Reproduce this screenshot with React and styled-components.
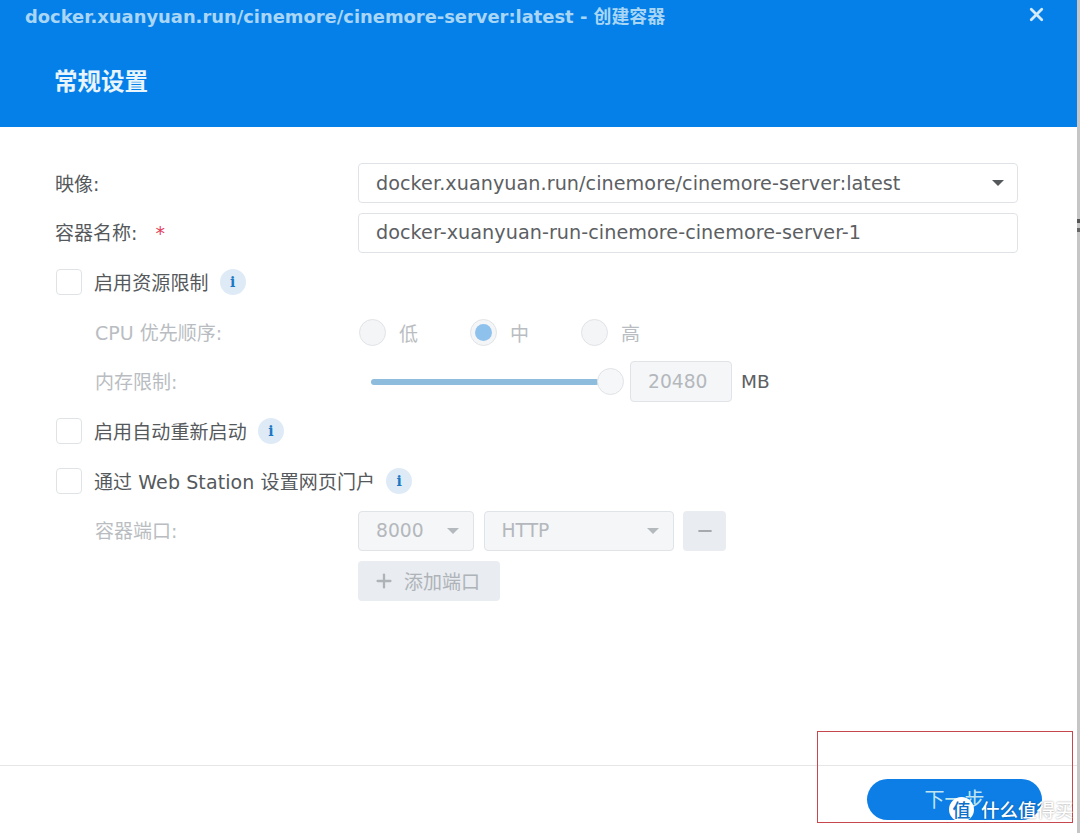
import React from 'react';
import styled, { createGlobalStyle } from 'styled-components';
import { X, Plus, Minus } from 'lucide-react';

const Global = createGlobalStyle`
  html, body { margin: 0; padding: 0; background: #fff; }
  body { font-family: "DejaVu Sans", "Noto Sans CJK SC", sans-serif; width: 1080px; height: 833px; overflow: hidden; }
`;

const CJK = `"DejaVu Sans", "Noto Sans CJK SC", sans-serif`;

const Dialog = styled.div`
  position: relative;
  width: 1077px;
  height: 833px;
  display: flex;
  flex-direction: column;
  background: #fff;
  border-right: 3px solid #c6c6c6;
`;

const EdgeNotch = styled.span`
  position: absolute;
  right: -3px;
  top: 219px;
  width: 3px;
  height: 13px;
  background: linear-gradient(#555 0 4px, #c6c6c6 4px 9px, #666 9px);
`;

const Header = styled.header`
  height: 127px;
  box-sizing: border-box;
  background: #0680e9;
  flex: none;
  display: flex;
  flex-direction: column;
  padding: 0 30px 0 25px;
`;

const TitleBar = styled.div`
  height: 29px;
  display: flex;
  align-items: center;
  justify-content: space-between;
`;

const WindowTitle = styled.div`
  font: 700 17.9px ${CJK};
  color: #a9d6f5;
  white-space: nowrap;
`;

const Close = styled.span`
  display: flex;
  color: #d3ebfb;
`;

const PageTitle = styled.h1`
  margin: 39px 0 0 29px;
  font: 700 23.5px/24px "Noto Sans CJK SC", sans-serif;
  color: #e9f5fd;
`;

const Form = styled.main`
  flex: 1;
  padding: 36px 59px 0 55px;
  display: flex;
  flex-direction: column;
  gap: 9.7px;
`;

const Row = styled.div`
  height: 40px;
  display: flex;
  align-items: center;
`;

const Label = styled.div`
  width: 303px;
  box-sizing: border-box;
  flex: none;
  font-size: 19px;
  white-space: nowrap;
  color: ${p => (p.$off ? '#b9bdc1' : '#55595c')};
  padding-left: ${p => (p.$indent ? '40px' : '0')};
  padding-bottom: 2px;
`;

const Star = styled.span`
  color: #e2415c;
  margin-left: 18px;
`;

const Field = styled.div`
  flex: 1;
  height: 40px;
  box-sizing: border-box;
  border: 1px solid #dfe3e8;
  border-radius: 4px;
  display: flex;
  align-items: center;
  justify-content: space-between;
  padding: 0 13px 0 17px;
  font-size: 19.2px;
  letter-spacing: 0.05px;
  color: #5c6063;
  white-space: nowrap;
`;

const Caret = styled.i`
  width: 0;
  height: 0;
  border: 6px solid transparent;
  border-top: 6px solid ${p => (p.$off ? '#b4b9be' : '#55595c')};
  border-bottom: 0;
`;

const Check = styled.span`
  width: 26px;
  height: 26px;
  box-sizing: border-box;
  flex: none;
  margin: 0 12px 0 1px;
  border: 1px solid #dfe3e6;
  border-radius: 4px;
  background: #fff;
`;

const CheckLabel = styled.span`
  font-size: 19px;
  letter-spacing: 0.1px;
  color: #55595c;
  white-space: nowrap;
  padding-bottom: 2px;
`;

const Info = styled.span`
  width: 26px;
  height: 26px;
  margin-left: 11px;
  flex: none;
  border-radius: 50%;
  background: #deebf7;
  color: #1d78c4;
  font: 700 14px/26px "DejaVu Serif", serif;
  text-align: center;
`;

const RadioGroup = styled.div`
  display: flex;
  align-items: center;
  margin-left: 1px;
`;

const RadioItem = styled.div`
  width: 111px;
  display: flex;
  align-items: center;
  gap: 13px;
  font-size: 19px;
  color: #b9bdc1;
`;

const Radio = styled.span`
  width: 27px;
  height: 27px;
  box-sizing: border-box;
  border-radius: 50%;
  border: 1px solid #e0e3e6;
  background: #f4f5f7;
  display: flex;
  align-items: center;
  justify-content: center;
  &::after {
    content: '';
    display: ${p => (p.$on ? 'block' : 'none')};
    width: 17px;
    height: 17px;
    border-radius: 50%;
    background: #8fc1ed;
  }
`;

const SliderWrap = styled.div`
  display: flex;
  align-items: center;
  margin-left: 13px;
`;

const Track = styled.div`
  width: 228px;
  height: 6px;
  border-radius: 3px;
  background: #8dbcdc;
`;

const Thumb = styled.span`
  width: 27px;
  height: 27px;
  box-sizing: border-box;
  margin-left: -2px;
  border-radius: 50%;
  border: 1px solid #e0e3e6;
  background: #f6f7f8;
`;

const NumberBox = styled.div`
  width: 102px;
  height: 41px;
  box-sizing: border-box;
  margin-left: 6px;
  border: 1px solid #e0e3e7;
  border-radius: 4px;
  background: #f5f6f8;
  color: #b4b8bc;
  font-size: 18.7px;
  line-height: 39px;
  padding-left: 17px;
`;

const Unit = styled.span`
  margin-left: 9px;
  font-size: 18.5px;
  color: #5c6063;
`;

const Dim = styled.div`
  width: ${p => p.$w}px;
  height: 40px;
  box-sizing: border-box;
  border: 1px solid #e0e3e7;
  border-radius: 4px;
  background: #f5f6f8;
  color: #b4b8bc;
  font-size: 18.7px;
  display: flex;
  align-items: center;
  justify-content: space-between;
  padding: 0 14px 0 17px;
  margin-right: 9.5px;
`;

const IconBtn = styled.div`
  width: 43px;
  height: 40px;
  border-radius: 4px;
  background: #e9ecf0;
  color: #a5aaaf;
  display: flex;
  align-items: center;
  justify-content: center;
`;

const AddBtn = styled.div`
  width: 142px;
  height: 40px;
  margin-left: 303px;
  border-radius: 4px;
  background: #e9ecf0;
  color: #aeb3b8;
  font-size: 19px;
  display: flex;
  align-items: center;
  padding-left: 15px;
  gap: 9px;
  box-sizing: border-box;
`;

const Footer = styled.footer`
  height: 68px;
  box-sizing: border-box;
  flex: none;
  border-top: 1px solid #e6e6e6;
  display: flex;
  justify-content: flex-end;
  padding: 13px 35px 0 0;
`;

const NextBtn = styled.div`
  width: 175px;
  height: 41px;
  border-radius: 21px;
  background: #0d7ee6;
  color: #bfe6f0;
  font-size: 20px;
  line-height: 39px;
  text-align: center;
  font-family: "Noto Sans CJK SC", sans-serif;
`;

const Callout = styled.div`
  position: absolute;
  left: 817px;
  top: 731px;
  width: 256px;
  height: 92px;
  box-sizing: border-box;
  border: 1px solid #c8474d;
`;

const Watermark = styled.div`
  position: absolute;
  left: 949px;
  top: 796px;
  display: flex;
  align-items: center;
  gap: 7px;
  color: #fff;
  font: 500 18.5px "Noto Sans CJK SC", sans-serif;
  white-space: nowrap;
  text-shadow: 0 0 2px rgba(0, 0, 0, 0.4);
`;

const Mark = styled.span`
  width: 25px;
  height: 25px;
  border-radius: 50%;
  background: #fff;
  color: #0d6fc9;
  font-size: 18px;
  line-height: 25px;
  text-align: center;
  text-shadow: none;
`;

const InfoDot = () => <Info>i</Info>;

export default function App() {
  return (
    <Dialog>
      <Global />
      <Header>
        <TitleBar>
          <WindowTitle>docker.xuanyuan.run/cinemore/cinemore-server:latest - 创建容器</WindowTitle>
          <Close><X size={21} strokeWidth={3.2} /></Close>
        </TitleBar>
        <PageTitle>常规设置</PageTitle>
      </Header>
      <Form>
        <Row>
          <Label>映像:</Label>
          <Field>docker.xuanyuan.run/cinemore/cinemore-server:latest<Caret /></Field>
        </Row>
        <Row>
          <Label>容器名称:<Star>*</Star></Label>
          <Field>docker-xuanyuan-run-cinemore-cinemore-server-1</Field>
        </Row>
        <Row>
          <Check /><CheckLabel>启用资源限制</CheckLabel><InfoDot />
        </Row>
        <Row>
          <Label $off $indent>CPU 优先顺序:</Label>
          <RadioGroup>
            <RadioItem><Radio />低</RadioItem>
            <RadioItem><Radio $on />中</RadioItem>
            <RadioItem><Radio />高</RadioItem>
          </RadioGroup>
        </Row>
        <Row>
          <Label $off $indent>内存限制:</Label>
          <SliderWrap>
            <Track /><Thumb />
            <NumberBox>20480</NumberBox>
            <Unit>MB</Unit>
          </SliderWrap>
        </Row>
        <Row>
          <Check /><CheckLabel>启用自动重新启动</CheckLabel><InfoDot />
        </Row>
        <Row>
          <Check /><CheckLabel>通过 Web Station 设置网页门户</CheckLabel><InfoDot />
        </Row>
        <Row>
          <Label $off $indent>容器端口:</Label>
          <Dim $w={116}>8000<Caret $off /></Dim>
          <Dim $w={190}>HTTP<Caret $off /></Dim>
          <IconBtn><Minus size={20} strokeWidth={2.5} /></IconBtn>
        </Row>
        <Row>
          <AddBtn><Plus size={22} strokeWidth={2.5} />添加端口</AddBtn>
        </Row>
      </Form>
      <Footer>
        <NextBtn>下一步</NextBtn>
      </Footer>
      <Callout />
      <Watermark><Mark>值</Mark>什么值得买</Watermark>
      <EdgeNotch />
    </Dialog>
  );
}
